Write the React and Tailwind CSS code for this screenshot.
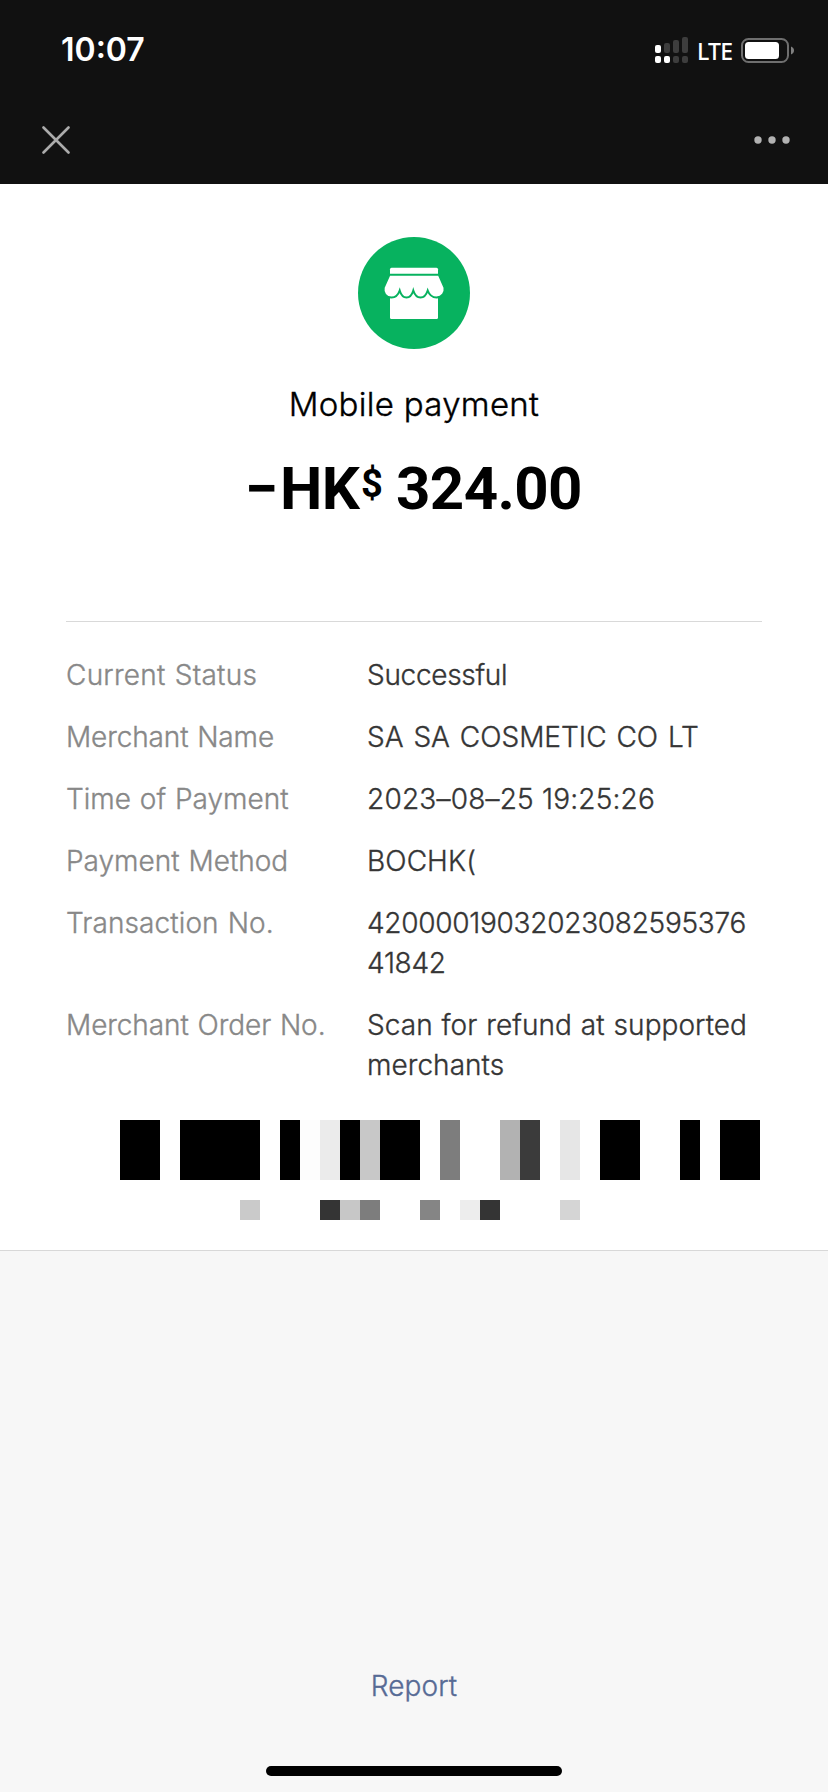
import React from 'react';

const details = [
  { label: 'Current Status', labelTracking: 'tracking-[0.25px]', lines: ['Successful'], tracking: 'tracking-[-0.3px]' },
  { label: 'Merchant Name', labelTracking: 'tracking-[-0.12px]', lines: ['SA SA COSMETIC CO LT'], tracking: '[word-spacing:2px]' },
  { label: 'Time of Payment', labelTracking: '', lines: ['2023–08–25 19:25:26'], tracking: 'tracking-[0.2px]' },
  { label: 'Payment Method', labelTracking: '', lines: ['BOCHK('], tracking: 'tracking-[0.1px]' },
  {
    label: 'Transaction No.',
    labelTracking: 'tracking-[0.1px]',
    lines: ['42000019032023082595376', '41842'],
    tracking: 'tracking-[-0.28px]',
  },
  {
    label: 'Merchant Order No.',
    labelTracking: 'tracking-[-0.08px]',
    lines: ['Scan for refund at supported', 'merchants'],
    tracking: 'tracking-[0.05px] [word-spacing:1px]',
  },
];

// Each cell is 20px wide, null leaves a gap
const K = '#000000';
const barcode = [
  K, K, null, K, K, K, K, null, K, '#fdfdfd', '#ebebeb', K, '#c8c8c8', K, K, null,
  '#7d7d7d', null, null, '#b2b2b2', '#3b3b3b', null, '#e6e6e6', null, K, K, null, null, K, null, K, K,
];
const barcodeDigits = [
  '#cacaca', null, null, null, '#343434', '#c7c7c7', '#7d7d7d', null, null,
  '#858585', null, '#ededed', '#343434', null, null, null, '#d5d5d5',
];

function SignalIcon() {
  return (
    <svg className="w-[33px] h-[26px]" viewBox="0 0 33 26" fill="#3d3d3d">
      <rect x="0" y="8" width="6" height="8" rx="2" fill="#fff" />
      <rect x="9" y="6" width="6" height="10" rx="2" />
      <rect x="18" y="3" width="6" height="13" rx="2" />
      <rect x="27" y="0" width="6" height="16" rx="2" />
      <rect x="0" y="19" width="6" height="7" rx="2" fill="#fff" />
      <rect x="9" y="19" width="6" height="7" rx="2" fill="#fff" />
      <rect x="18" y="19" width="6" height="7" rx="2" />
      <rect x="27" y="19" width="6" height="7" rx="2" />
    </svg>
  );
}

function BatteryIcon() {
  return (
    <svg className="w-[53px] h-[25px]" viewBox="0 0 53 25" fill="none">
      <rect x="1" y="1" width="46" height="23" rx="6.5" stroke="#6f6f6f" strokeWidth="2" />
      <rect x="4" y="4" width="34" height="17" rx="3.5" fill="#fff" />
      <path d="M50 8.5c1.9.7 3 2.2 3 4s-1.1 3.3-3 4z" fill="#808080" />
    </svg>
  );
}

function StoreIcon() {
  return (
    <svg className="w-28 h-28" viewBox="0 0 112 112">
      <circle cx="56" cy="56" r="56" fill="#07b25f" />
      <path d="M32 56h48v24.5a1.5 1.5 0 0 1-1.5 1.5h-45a1.5 1.5 0 0 1-1.5-1.5z" fill="#fff" />
      <path
        d="M31.5 37.7h49.3l5.7 12.8c.9 5.3-2.5 10-8 10-4.2 0-7.200-2.600-8.800-7-1.400 4.400-4 7-7.200 7s-5.800-2.600-7.200-7c-1.300 4.400-4 7-6.800 7s-5.500-2.600-6.800-7c-1.500 4.400-4.500 7-8.200 7-5.500 0-8.800-4.700-7.800-10z"
        fill="#fff"
        stroke="#07b25f"
        strokeWidth="2"
      />
      <path d="M33.5 30.7h45a1.5 1.5 0 0 1 1.500 1.500v4.500H32v-4.500a1.500 1.500 0 0 1 1.500-1.500z" fill="#fff" />
    </svg>
  );
}

function Header() {
  return (
    <header className="h-[184px] flex-none bg-[#111111] text-white">
      {/* Status bar */}
      <div className="flex h-[100px] items-center justify-between pl-[61px] pr-[34px]">
        <span className="text-[32px] font-semibold leading-10">10:07</span>
        <div className="flex items-center">
          <SignalIcon />
          <span className="ml-[9px] w-11 pt-px font-['Noto_Sans',sans-serif] text-[23px] font-medium leading-8 tracking-[-0.8px]">
            LTE
          </span>
          <BatteryIcon />
        </div>
      </div>

      {/* Navigation */}
      <div className="flex h-20 items-center justify-between pl-[42px] pr-[38px]">
        <button aria-label="Close">
          <svg className="w-7 h-7" viewBox="0 0 28 28" stroke="#ababab" strokeWidth="2.6" strokeLinecap="round">
            <path d="M1.5 1.5l25 25M26.5 1.5l-25 25" />
          </svg>
        </button>
        <button aria-label="More">
          <svg className="w-9 h-2" viewBox="0 0 36 8" fill="#b2b2b2">
            <circle cx="4" cy="4" r="3.7" />
            <circle cx="18" cy="4" r="3.7" />
            <circle cx="32" cy="4" r="3.7" />
          </svg>
        </button>
      </div>
    </header>
  );
}

function Cells({ cells, height }) {
  return (
    <div className={`flex ${height}`}>
      {cells.map((color, i) => (
        <div key={i} className="w-5" style={{ backgroundColor: color || 'transparent' }} />
      ))}
    </div>
  );
}

function App() {
  return (
    <div className="flex h-[1792px] w-[828px] flex-col overflow-hidden bg-[#f7f7f7] font-['Inter',sans-serif]">
      <Header />

      <main className="h-[1067px] flex-none border-b border-[#d8d8d8] bg-white pt-[53px]">
        {/* Summary */}
        <div className="flex flex-col items-center text-black">
          <StoreIcon />
          <h1 className="mt-[34px] text-[33px] font-light leading-[42px] tracking-[0.3px] [-webkit-text-stroke:0.4px]">
            Mobile payment
          </h1>
          <div className="mt-6 flex h-[80px] items-baseline font-['Roboto',sans-serif] text-[60px] font-bold leading-[80px]">
            <span className="w-[35px]">−</span>
            <span className="w-[81px] tracking-[-0.6px]">HK</span>
            <span className="w-[35px] self-start text-[38px] leading-[70px]">$</span>
            <span className="w-[187px] tracking-[-0.6px]">324.00</span>
          </div>
        </div>

        {/* Details */}
        <div className="mx-[66px] mt-[92px] flex flex-col gap-[22px] border-t border-[#d9d9d9] pt-[33px] text-[28px] font-light leading-10 [-webkit-text-stroke:0.35px]">
          {details.map(({ label, labelTracking, lines, tracking }) => (
            <div key={label} className="flex">
              <div className={`w-[301px] flex-none whitespace-nowrap text-[#888888] [word-spacing:1px] ${labelTracking}`}>
                {label}
              </div>
              <div className={`whitespace-nowrap text-[#353535] ${tracking}`}>
                {lines.map((line) => (
                  <p key={line}>{line}</p>
                ))}
              </div>
            </div>
          ))}
        </div>

        {/* Barcode */}
        <div className="mt-[35px] flex flex-col gap-5">
          <div className="pl-[120px]">
            <Cells cells={barcode} height="h-[60px]" />
          </div>
          <div className="pl-[240px]">
            <Cells cells={barcodeDigits} height="h-5" />
          </div>
        </div>
      </main>

      <footer className="flex flex-1 flex-col items-center justify-end pb-4">
        <a className="text-[28px] font-light leading-10 tracking-[0.1px] text-[#576b95] [-webkit-text-stroke:0.35px]">
          Report
        </a>
        <div className="mt-[60px] h-2.5 w-[296px] rounded-full bg-black" />
      </footer>
    </div>
  );
}

export default App;
